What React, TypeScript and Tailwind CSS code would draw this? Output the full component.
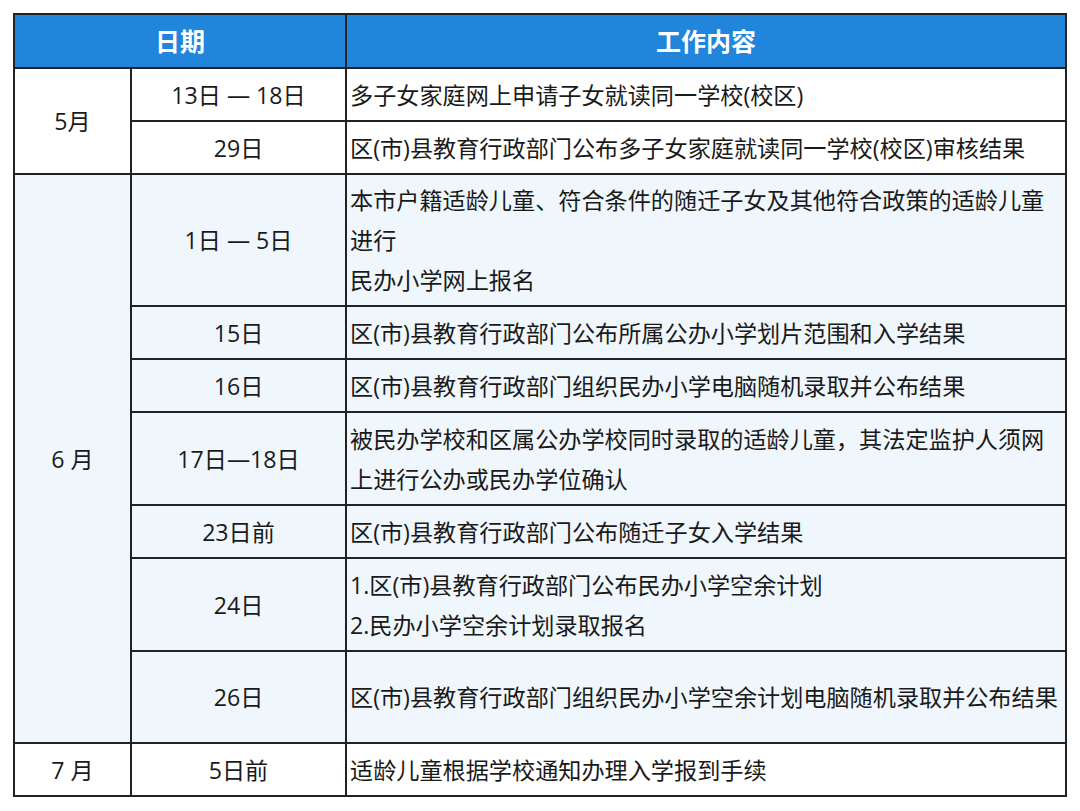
import React from 'react';

type Row = {
    date: string;
    content: React.ReactNode;
    h: string;
};

type Group = {
    month: string;
    shaded: boolean;
    rows: Row[];
};

const groups: Group[] = [
    {
        month: '5月',
        shaded: false,
        rows: [
            { date: '13日 — 18日', content: '多子女家庭网上申请子女就读同一学校(校区)', h: 'h-[53px]' },
            { date: '29日', content: '区(市)县教育行政部门公布多子女家庭就读同一学校(校区)审核结果', h: 'h-[53px]' },
        ],
    },
    {
        month: '6 月',
        shaded: true,
        rows: [
            {
                date: '1日 — 5日',
                content: (
                    <>
                        本市户籍适龄儿童、符合条件的随迁子女及其他符合政策的适龄儿童
                        <br />
                        进行
                        <br />
                        民办小学网上报名
                    </>
                ),
                h: 'h-[132px]',
            },
            { date: '15日', content: '区(市)县教育行政部门公布所属公办小学划片范围和入学结果', h: 'h-[53px]' },
            { date: '16日', content: '区(市)县教育行政部门组织民办小学电脑随机录取并公布结果', h: 'h-[53px]' },
            {
                date: '17日—18日',
                content: (
                    <>
                        被民办学校和区属公办学校同时录取的适龄儿童，其法定监护人须网
                        <br />
                        上进行公办或民办学位确认
                    </>
                ),
                h: 'h-[93px]',
            },
            { date: '23日前', content: '区(市)县教育行政部门公布随迁子女入学结果', h: 'h-[53px]' },
            {
                date: '24日',
                content: (
                    <>
                        1.区(市)县教育行政部门公布民办小学空余计划
                        <br />
                        2.民办小学空余计划录取报名
                    </>
                ),
                h: 'h-[93px]',
            },
            { date: '26日', content: '区(市)县教育行政部门组织民办小学空余计划电脑随机录取并公布结果', h: 'h-[92px]' },
        ],
    },
    {
        month: '7 月',
        shaded: false,
        rows: [{ date: '5日前', content: '适龄儿童根据学校通知办理入学报到手续', h: 'h-[53px]' }],
    },
];

export default function App() {
    return (
        <div
            className="w-[1080px] h-[811px] bg-white pl-[13px] pt-[13px] text-[#1a1a1a]"
            style={{ fontFamily: '"Open Sans", "Noto Sans CJK SC", sans-serif' }}
        >
            <table className="w-[1054px] table-fixed border-collapse border-2 border-[#222] text-[23.15px] leading-[40px]">
                <colgroup>
                    <col className="w-[117px]" />
                    <col className="w-[215px]" />
                    <col />
                </colgroup>
                <thead>
                    <tr className="h-[54px] bg-[#2185dc] text-white font-bold text-[25px]">
                        <th colSpan={2} className="border-2 border-[#222] text-center align-middle">日期</th>
                        <th className="border-2 border-[#222] text-center align-middle">工作内容</th>
                    </tr>
                </thead>
                <tbody>
                    {groups.map((group) =>
                        group.rows.map((row, i) => (
                            <tr key={group.month + row.date} className={`${row.h} ${group.shaded ? 'bg-[#f0f7fc]' : 'bg-white'}`}>
                                {i === 0 && (
                                    <td rowSpan={group.rows.length} className="border-2 border-[#222] text-center align-middle">
                                        {group.month}
                                    </td>
                                )}
                                <td className="border-2 border-[#222] text-center align-middle">{row.date}</td>
                                <td className="border-2 border-[#222] pl-[3px] align-middle whitespace-nowrap">{row.content}</td>
                            </tr>
                        ))
                    )}
                </tbody>
            </table>
        </div>
    );
}
